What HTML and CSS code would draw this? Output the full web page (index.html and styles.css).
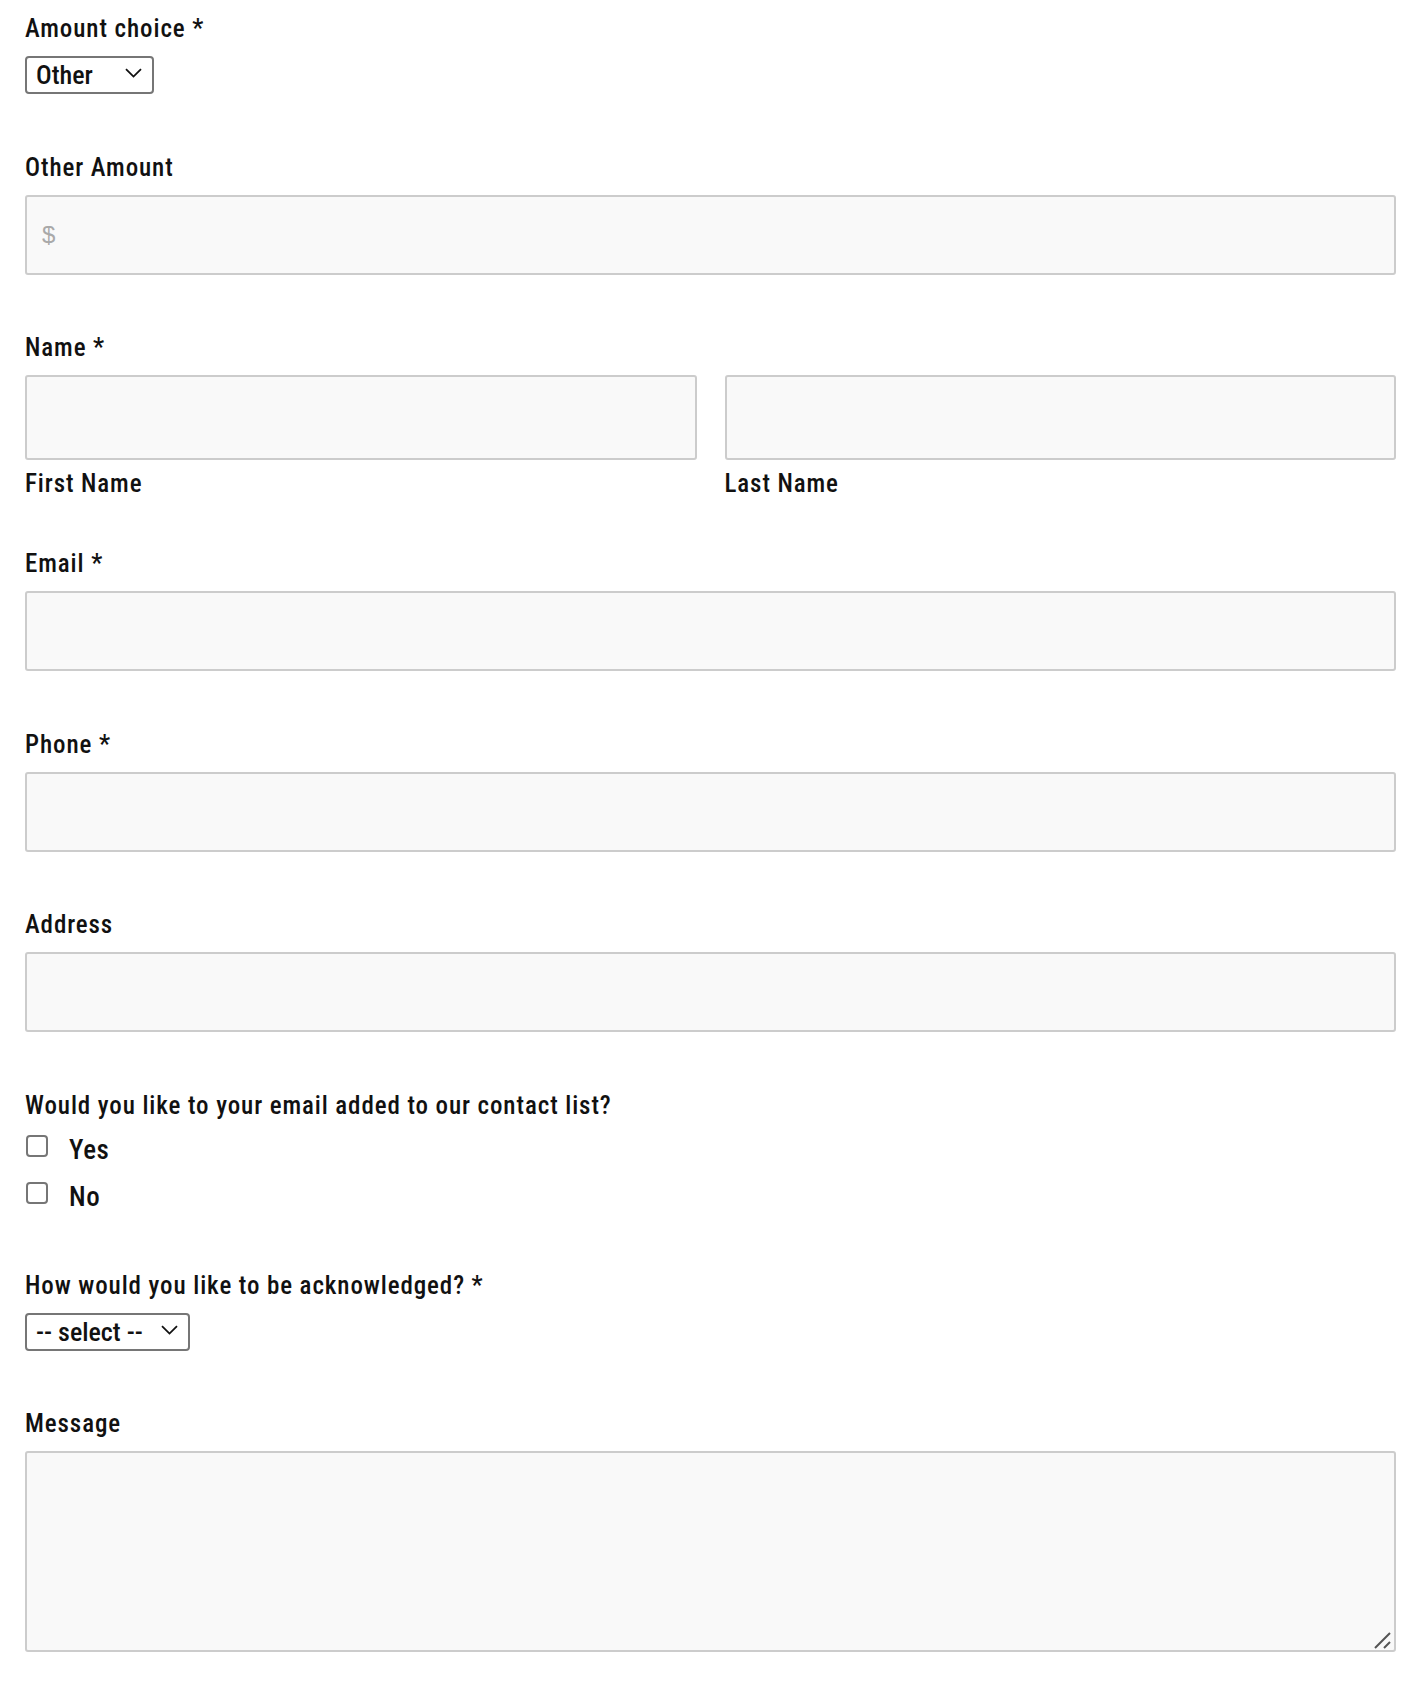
FILE: index.html
```html
<!DOCTYPE html>
<html lang="en">
<head>
<meta charset="utf-8">
<title>Donation form</title>
<link rel="stylesheet" href="styles.css">
</head>
<body>
<form class="form">
  <div class="field field-first">
    <label class="label" for="amount">Amount choice *</label>
    <span class="select-wrap">
      <select id="amount" class="select select-amount">
        <option>$25</option>
        <option>$50</option>
        <option>$100</option>
        <option selected>Other</option>
      </select>
      <svg class="chevron" width="17" height="10" viewBox="0 0 17 10" aria-hidden="true"><path d="M1 1.2L8.5 8.6L16 1.2" fill="none" stroke="#111" stroke-width="1.8"/></svg>
    </span>
  </div>

  <div class="field">
    <label class="label" for="other">Other Amount</label>
    <input id="other" class="input" type="text" placeholder="$">
  </div>

  <div class="field field-name">
    <div class="label">Name *</div>
    <div class="name-row">
      <div class="name-col">
        <input id="first" class="input input-name" type="text">
        <label class="sublabel" for="first">First Name</label>
      </div>
      <div class="name-col">
        <input id="last" class="input input-name" type="text">
        <label class="sublabel" for="last">Last Name</label>
      </div>
    </div>
  </div>

  <div class="field">
    <label class="label" for="email">Email *</label>
    <input id="email" class="input" type="email">
  </div>

  <div class="field">
    <label class="label" for="phone">Phone *</label>
    <input id="phone" class="input" type="tel">
  </div>

  <div class="field">
    <label class="label" for="address">Address</label>
    <input id="address" class="input" type="text">
  </div>

  <div class="field">
    <div class="label">Would you like to your email added to our contact list?</div>
    <div class="options">
      <label class="option"><input class="check" type="checkbox"><span>Yes</span></label>
      <label class="option"><input class="check" type="checkbox"><span>No</span></label>
    </div>
  </div>

  <div class="field">
    <label class="label" for="ack">How would you like to be acknowledged? *</label>
    <span class="select-wrap">
      <select id="ack" class="select select-ack">
        <option selected>-- select --</option>
        <option>Email</option>
        <option>Mail</option>
      </select>
      <svg class="chevron" width="17" height="10" viewBox="0 0 17 10" aria-hidden="true"><path d="M1 1.2L8.5 8.6L16 1.2" fill="none" stroke="#111" stroke-width="1.8"/></svg>
    </span>
  </div>

  <div class="field">
    <label class="label" for="message">Message</label>
    <span class="textarea-wrap">
      <textarea id="message" class="input textarea"></textarea>
      <svg class="grip" width="18" height="18" viewBox="0 0 18 18" aria-hidden="true"><path d="M1 17L16 2M10 17L16 11" fill="none" stroke="#555" stroke-width="2"/></svg>
    </span>
  </div>
</form>
</body>
</html>
```
FILE: styles.css
```css
html, body {
  margin: 0;
  padding: 0;
  background: #ffffff;
}

body {
  font-family: "Roboto Condensed", Roboto, "Liberation Sans", sans-serif;
  font-stretch: condensed;
  color: #111111;
}

.form {
  width: 1371px;
  padding: 13.5px 0 40px 25px;
  display: flex;
  flex-direction: column;
}

.field {
  display: flex;
  flex-direction: column;
  align-items: flex-start;
  margin-bottom: 58.5px;
}

.field-first .label {
  margin-bottom: 12.5px;
}

.field-name {
  margin-bottom: 50px;
}

.label {
  display: block;
  font-size: 25px;
  font-weight: 500;
  line-height: 30px;
  letter-spacing: 0.9px;
  margin-bottom: 12px;
  color: #111111;
}

.input {
  box-sizing: border-box;
  width: 100%;
  height: 80px;
  margin: 0;
  padding: 0 15px;
  border: 2px solid #cccccc;
  border-radius: 3px;
  background: #f9f9f9;
  font-family: "Liberation Sans", Arial, sans-serif;
  font-size: 24px;
  color: #333333;
}

.input::placeholder {
  color: #a9a9a9;
}

.input-name {
  height: 85px;
}

.name-row {
  width: 100%;
  display: grid;
  grid-template-columns: 1fr 1fr;
  column-gap: 28px;
}

.name-col {
  display: flex;
  flex-direction: column;
}

.sublabel {
  font-size: 25px;
  font-weight: 500;
  line-height: 30px;
  letter-spacing: 0.9px;
  margin-top: 9px;
  color: #111111;
}

.select-wrap {
  position: relative;
  display: inline-block;
}

.select {
  appearance: none;
  -webkit-appearance: none;
  box-sizing: border-box;
  height: 38px;
  margin: 0;
  padding: 0 0 0 9px;
  border: 2px solid #767676;
  border-radius: 4px;
  background-color: #ffffff;
  font-family: "Roboto Condensed", Roboto, sans-serif;
  font-stretch: condensed;
  font-size: 26px;
  font-weight: 500;
  line-height: 34px;
  color: #111111;
}

.select-amount {
  width: 129px;
}

.select-ack {
  width: 165px;
}

.chevron {
  position: absolute;
  right: 12px;
  top: 12px;
  pointer-events: none;
}

.options {
  display: flex;
  flex-direction: column;
  row-gap: 17px;
  margin-top: 2.5px;
}

.option {
  display: flex;
  align-items: flex-start;
  column-gap: 21px;
  font-size: 27px;
  font-weight: 500;
  line-height: 30px;
  letter-spacing: 0.6px;
}

.check {
  appearance: none;
  -webkit-appearance: none;
  box-sizing: border-box;
  width: 22px;
  height: 22px;
  margin: 0 0 0 1px;
  border: 2px solid #767676;
  border-radius: 4px;
  background: #ffffff;
}

.textarea-wrap {
  position: relative;
  display: block;
  width: 100%;
}

.textarea {
  display: block;
  height: 201px;
  padding: 12px 15px;
  resize: none;
}

.grip {
  position: absolute;
  right: 4px;
  bottom: 3px;
  pointer-events: none;
}
```
